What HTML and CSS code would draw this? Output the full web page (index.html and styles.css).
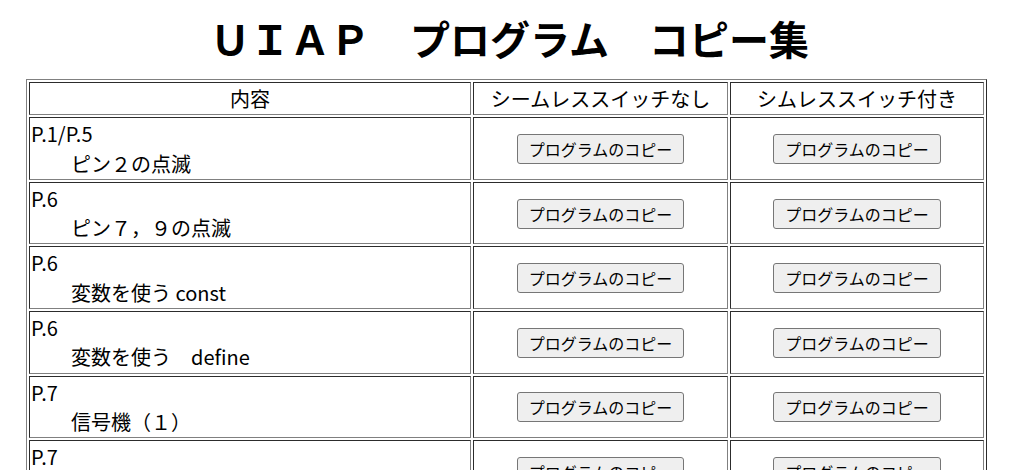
FILE: index.html
```html
<!DOCTYPE html>
<html lang="ja">
<head>
<meta charset="utf-8">
<title>UIAP プログラム コピー集</title>
<link rel="stylesheet" href="styles.css">
</head>
<body>
<h1 class="title">ＵＩＡＰ　プログラム　コピー集</h1>
<table class="copy-table">
  <colgroup>
    <col class="col-desc">
    <col class="col-btn">
    <col class="col-btn2">
  </colgroup>
  <thead>
    <tr>
      <th>内容</th>
      <th>シームレススイッチなし</th>
      <th>シムレススイッチ付き</th>
    </tr>
  </thead>
  <tbody>
    <tr>
      <td class="desc">P.1/P.5<br>　　ピン２の点滅</td>
      <td class="act"><button class="copy-btn">プログラムのコピー</button></td>
      <td class="act"><button class="copy-btn">プログラムのコピー</button></td>
    </tr>
    <tr>
      <td class="desc">P.6<br>　　ピン７，９の点滅</td>
      <td class="act"><button class="copy-btn">プログラムのコピー</button></td>
      <td class="act"><button class="copy-btn">プログラムのコピー</button></td>
    </tr>
    <tr>
      <td class="desc">P.6<br>　　変数を使う const</td>
      <td class="act"><button class="copy-btn">プログラムのコピー</button></td>
      <td class="act"><button class="copy-btn">プログラムのコピー</button></td>
    </tr>
    <tr>
      <td class="desc">P.6<br>　　変数を使う　define</td>
      <td class="act"><button class="copy-btn">プログラムのコピー</button></td>
      <td class="act"><button class="copy-btn">プログラムのコピー</button></td>
    </tr>
    <tr>
      <td class="desc">P.7<br>　　信号機（１）</td>
      <td class="act"><button class="copy-btn">プログラムのコピー</button></td>
      <td class="act"><button class="copy-btn">プログラムのコピー</button></td>
    </tr>
    <tr>
      <td class="desc">P.7<br>　　信号機（２）</td>
      <td class="act"><button class="copy-btn">プログラムのコピー</button></td>
      <td class="act"><button class="copy-btn">プログラムのコピー</button></td>
    </tr>
  </tbody>
</table>
</body>
</html>
```
FILE: styles.css
```css
html, body {
  background: #ffffff;
}
body {
  margin: 8px;
  font-family: "Noto Sans CJK JP", "Noto Sans", sans-serif;
  color: #000000;
}
.title {
  font-size: 40px;
  font-weight: bold;
  text-align: center;
  margin: 2px 0 11px;
  line-height: 1.448;
}
.copy-table {
  margin-left: 18px;
  width: 961px;
  table-layout: fixed;
  border: 1px outset #808080;
  border-spacing: 2px;
  font-size: 20px;
  line-height: 29.3px;
}
.col-desc { width: 442px; }
.col-btn { width: 255px; }
.col-btn2 { width: 254px; }
.copy-table th,
.copy-table td {
  border: 1px inset #808080;
  padding: 1px;
  box-sizing: border-box;
}
.copy-table th {
  font-weight: normal;
  text-align: center;
}
.desc {
  text-align: left;
  vertical-align: middle;
}
.act {
  text-align: center;
  vertical-align: middle;
}
.copy-btn {
  font-family: "Noto Sans CJK JP", sans-serif;
  font-size: 16px;
  line-height: 22px;
  padding: 3px 11px;
  border: 1px solid #767676;
  border-radius: 3px;
  background: #efefef;
  color: #000000;
}
```
